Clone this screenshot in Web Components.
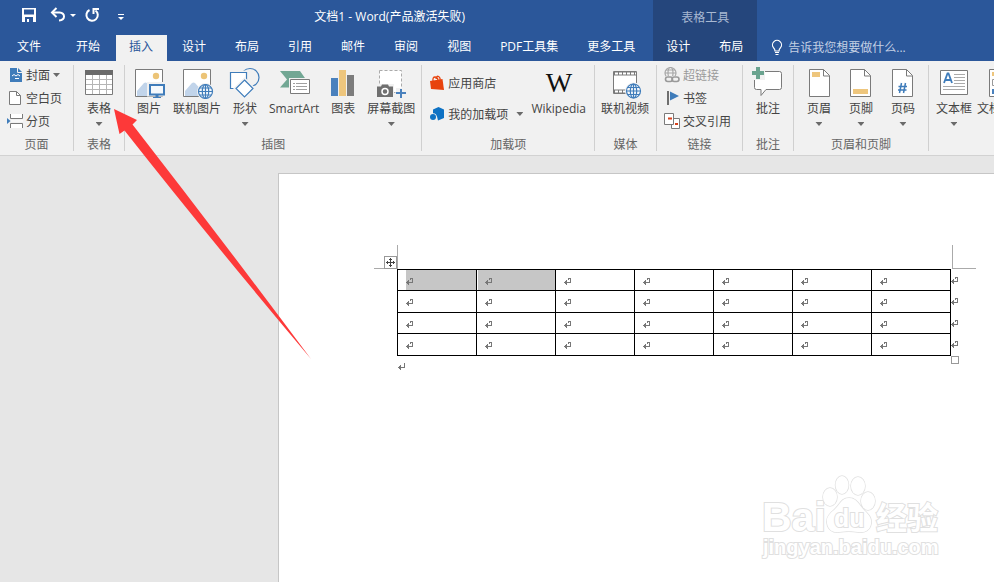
<!DOCTYPE html>
<html lang="zh-CN">
<head>
<meta charset="utf-8">
<title>文档1 - Word</title>
<style>
  html, body { margin: 0; height: 100%; }
  body {
    font: 12px/16px "Open Sans", "Noto Sans CJK SC", sans-serif;
    color: #444;
    overflow: hidden;
  }
</style>
</head>
<body>
<word-window></word-window>

<script>
const define = (name, html, setup) => {
  const tpl = document.createElement('template');
  tpl.innerHTML = html;
  customElements.define(name, class extends HTMLElement {
    constructor() {
      super();
      this.attachShadow({ mode: 'open' }).append(tpl.content.cloneNode(true));
    }
    connectedCallback() { if (setup) setup.call(this, this.shadowRoot); }
  });
};

/* ---------- icons ---------- */
const globe = (x, y, c = '#3f7cba') => `<g fill="#f4f8fc" stroke="${c}" stroke-width="1.2"><circle cx="${x}" cy="${y}" r="7"/><g fill="none"><ellipse cx="${x}" cy="${y}" rx="3.2" ry="7"/><path d="M${x - 7} ${y}h14M${x} ${y - 7}v14M${x - 6} ${y - 3.5}h12M${x - 6} ${y + 3.5}h12"/></g></g>`;
const picture = '<path d="M2.5 1.5h27v27h-27z" fill="#fff" stroke="#7a7a7a"/><circle cx="23" cy="8" r="3.2" fill="#ecc477"/><path d="M4 28v-5l7-8q1.500-1 3 0l8 9v4z" fill="#c1d4ea"/>';
const sheet = x => `<path d="M${x + .5} 1.500h14l6 6v21h-20z" fill="#fff" stroke="#7a7a7a"/><path d="M${x + 14.5} 1.500v6.500h6" fill="none" stroke="#7a7a7a"/>`;
const ICONS = {
  table: [32, '<path d="M2.500 2.500h27v24h-27z" fill="#fff" stroke="#7a7a7a"/><path d="M2 2h28v5H2z" fill="#6a6a6a"/><path d="M9.500 7v19M16.500 7v19M23.500 7v19M3 11.500h26M3 16.500h26M3 21.500h26" stroke="#b5b5b5" fill="none"/>'],
  picture: [32, picture + '<path d="M16 16h15v10.500H16z" fill="#fff" stroke="#f1f1f1" stroke-width="4"/><path d="M17 17h14v9.500H17z" fill="#f4f8fc" stroke="#3f7cba" stroke-width="2"/><path d="M22.500 27h3v2h-3zM20 29h8v1h-8z" fill="#3f7cba"/>'],
  onlinepic: [32, picture + '<circle cx="24.500" cy="23.500" r="8.500" fill="#f1f1f1"/>' + globe(24.5, 23.5)],
  shapes: [32, '<g fill="#fff" stroke="#3f7cba" stroke-width="1.200"><circle cx="21" cy="9.500" r="9" fill="#f1f1f1"/><path d="M1.500 4.500h16v16h-16z" stroke="#f1f1f1" stroke-width="4"/><path d="M1.500 4.500h16v16h-16z"/><path d="M15.500 10l10.500 10.500-10.500 10.500L5 20.500z" stroke="#f1f1f1"/><path d="M15.500 12l8.500 8.500-8.500 8.500L7 20.500z"/></g>'],
  smartart: [32, '<path d="M2 3h20l6 8.500-6 8H2l7-8z" fill="#72a794"/><path d="M11 10h22v17H11z" fill="#f1f1f1"/><path d="M12.500 11.500h19v14h-19z" fill="#fff" stroke="#7a7a7a"/><path d="M15 15.500h2M15 18.500h2M15 21.500h2M18 15.500h11M18 18.500h11M18 21.500h11" stroke="#a0a0a0"/>'],
  chart: [32, '<path d="M4 10h7v18H4z" fill="#4a81bd"/><path d="M12 2h7v26h-7z" fill="#eec67d"/><path d="M20 7h7v21h-7z" fill="#7c7c7c"/>'],
  screenshot: [32, '<path d="M4.500 2.500h22v22h-22z" fill="#fff" stroke="#aaa" stroke-dasharray="3 2"/><path d="M1 16h18v14H1z" fill="#f1f1f1"/><path d="M2 18.500h4l1-2h6l1 2h4v10.500H2z" fill="#6f6f6f"/><circle cx="10" cy="23.500" r="3" fill="#6f6f6f" stroke="#fff" stroke-width="1.500"/><path d="M21 20h11v10H21z" fill="#f1f1f1"/><path d="M25 21h2v3h4v2h-4v4h-2v-4h-4v-2h4z" fill="#4a81bd"/>'],
  wiki: [32, '<text x="16" y="24" text-anchor="middle" font-family="Liberation Serif, serif" font-size="28" fill="#111">W</text>'],
  video: [32, '<path d="M4.500 3.500h23v22h-23z" fill="#fff" stroke="#7a7a7a"/><path d="M5 5.500h22M5 23.500h22" stroke="#7a7a7a" stroke-width="4"/><path d="M6 5.500h21M6 23.500h21" stroke="#fff" stroke-width="2" stroke-dasharray="3 1"/><circle cx="24.500" cy="23" r="8.500" fill="#f1f1f1"/>' + globe(24.5, 23)],
  comment: [32, '<path d="M4.500 3.500h23q2 0 2 2v14q0 2-2 2H14l-5 6v-6H4.500q-2 0-2-2v-14q0-2 2-2z" fill="#fff" stroke="#7a7a7a"/><path d="M-1-2h14v14H-1z" fill="#f1f1f1"/><path d="M4-1h4v4h4v4H8v4H4V7H0V3h4z" fill="#6aa38f"/>'],
  header: [32, sheet(6) + '<path d="M9 4h8v5H9z" fill="#eec67d"/>'],
  footer: [32, sheet(5) + '<path d="M8 21h15v5H8z" fill="#eec67d"/>'],
  pageno: [32, sheet(5) + '<path d="M14.500 15l-2 10M18.500 15l-2 10M11.500 18.500h8.500M11 22h8.500" stroke="#3f7cba" stroke-width="1.500" fill="none"/>'],
  textbox: [32, '<path d="M2.500 2.500h27v24h-27z" fill="#fff" stroke="#7a7a7a"/><path d="M6 15L9.500 5.500h1L14 15M7.500 12h5" stroke="#3f7cba" stroke-width="1.800" fill="none"/><path d="M16 6.500h11M16 9.500h11M16 12.500h11M16 15.500h11M5 18.500h22M5 21.500h22" stroke="#aaa"/>'],
  parts: [32, '<path d="M4.500 1.500h23v27h-23z" fill="#fff" stroke="#7a7a7a"/><path d="M7 4h8v4H7z" fill="#eec67d"/><path d="M7.500 11.500h8v6h-8z" fill="none" stroke="#999"/><path d="M7 21h8v5H7z" fill="#4a81bd"/>'],
  cover: [16, '<path d="M3 1h8l4 4v10H3z" fill="#3f7cba"/><path d="M10.500 1v4.500H15" fill="none" stroke="#f1f1f1"/><path d="M5 9l2-1.500L9 9l2-1.500L13 9M8 11.500h4" stroke="#fff" fill="none"/>'],
  blank: [16, '<path d="M2.500 1.500h7l4 4v9h-11z" fill="#fff" stroke="#7a7a7a"/><path d="M9.500 1.500v4h4" fill="none" stroke="#7a7a7a"/>'],
  pagebreak: [16, '<path d="M3.500 1v4.500h12V1M3.500 15v-4.500h12V15" fill="#fff" stroke="#7a7a7a"/><path d="M4 8h12" stroke="#fff"/><path d="M0 5l3.500 3L0 11z" fill="#3f7cba"/>'],
  store: [16, '<path d="M1 6l12.500-2 1.500 11-13-1z" fill="#e8420c"/><path d="M4 6q-.5-4 2-4t3 3M7 4q.5-3.500 2.500-2.500T11 5" fill="none" stroke="#e8420c" stroke-width="1.300"/>'],
  addins: [16, '<path d="M9.500 1l5.500 2.500v8.500l-6 2.500-1-4-4-2V3.500z" fill="#0e72c4"/><circle cx="4" cy="11" r="3.800" fill="#f1f1f1"/><circle cx="4" cy="11" r="3" fill="#0e72c4"/>'],
  link: [16, '<g fill="none" stroke="#a6a6a6" stroke-width="1.200"><circle cx="6.500" cy="6" r="5.500"/><ellipse cx="6.500" cy="6" rx="2.500" ry="5.500"/><path d="M1 6h11M2 3h9"/></g><path d="M2 9h14v7H2z" fill="#f1f1f1"/><g fill="none" stroke="#999" stroke-width="1.600"><rect x="1.500" y="10" width="7" height="4.500" rx="2.200"/><rect x="8" y="10" width="7" height="4.500" rx="2.200"/></g>'],
  bookmark: [16, '<path d="M3 1h2v14H3z" fill="#6f6f6f"/><path d="M6 1.500l9 4.500-9 4.500z" fill="#3f7cba"/>'],
  crossref: [16, '<path d="M7.500 5.500h8v10h-8z" fill="#fff" stroke="#7a7a7a"/><path d="M.500.500h9v11h-9z" fill="#fff" stroke="#7a7a7a"/><path d="M4 5.500h4M11 11h3" stroke="#d8431f" stroke-width="2"/>'],
  save: [16, '<path d="M1 1h14v14H1z" fill="#fff"/><path d="M3 2.500h10v5H3zM4 10h8v5H4z" fill="#2b579a"/><path d="M6 12h2v3H6z" fill="#fff"/>'],
  undo: [16, '<path d="M2 5.500h7.500q4.500.500 4.500 4t-5 4" fill="none" stroke="#fff" stroke-width="2"/><path d="M6.500 1L2 5.500 6.500 10" fill="none" stroke="#fff" stroke-width="2"/>'],
  redo: [16, '<path d="M5.500 3A5.700 5.700 0 1 0 11.500 3.500" fill="none" stroke="#fff" stroke-width="2"/><path d="M9.500 7V2H15" fill="none" stroke="#fff" stroke-width="2"/>'],
  more: [8, '<path d="M1 1.500h6" stroke="#fff"/><path d="M1 4h6L4 7z" fill="#fff"/>'],
  down: [8, '<path d="M1 3h6L4 6z" fill="#fff"/>'],
  bulb: [16, '<path d="M6 11q0-2-1.500-3.300a4.500 4.500 0 1 1 7 0Q10 9 10 11z" fill="none" stroke="#fff" stroke-width="1.200"/><path d="M6 12.500h4M6.500 14.500h3" stroke="#fff"/>']
};
define('word-icon', '<style>:host{display:block;flex:none}svg{display:block;overflow:visible}</style><div></div>',
  function (root) {
    const icon = ICONS[this.getAttribute('name')];
    if (!icon) return;
    const s = icon[0];
    root.querySelector('div').innerHTML = `<svg width="${s}" height="${s}" viewBox="0 0 ${s} ${s}" aria-hidden="true">${icon[1]}</svg>`;
  });

/* ---------- header ---------- */
define('quick-access', `
<style>
  :host { display: flex; align-items: center; width: 130px; height: 30px; box-sizing: border-box; padding-left: 21px; }
  button { border: 0; padding: 0; background: none; display: block; }
  .undo { margin-left: 13px; } .arrow { margin-left: 3px; } .redo { margin-left: 7px; } .more { margin-left: 17px; padding-top: 3px; }
</style>
<button aria-label="保存"><word-icon name="save"></word-icon></button>
<button class="undo" aria-label="撤消"><word-icon name="undo"></word-icon></button>
<button class="arrow" aria-label="撤消列表"><word-icon name="down"></word-icon></button>
<button class="redo" aria-label="重复"><word-icon name="redo"></word-icon></button>
<button class="more" aria-label="自定义"><word-icon name="more"></word-icon></button>`);

define('ribbon-tab', `
<style>
  :host { display: block; }
  button { display: block; height: 26px; border: 0; padding: 0 14px 2px 13px; background: none; color: #fff; font: inherit; white-space: nowrap; }
  :host([file]) button { padding-left: 17px; padding-right: 20px; }
  :host([active]) button { background: #f1f1f1; color: #2b579a; }
</style>
<button role="tab"><slot></slot></button>`);

define('word-header', `
<style>
  :host { display: flex; height: 61px; background: #2b579a; color: #fff; }
  .col { display: flex; flex-direction: column; justify-content: space-between; flex: none; }
  .main { padding-right: 4px; }
  .top { display: flex; align-items: center; }
  h1 { margin: 0; flex: 1; font: inherit; text-align: center; padding-top: 4px; }
  nav { display: flex; gap: 2px; }
  .context { background: #25467c; }
  .context p { margin: 0; padding-top: 10px; text-align: center; color: #a8b8d2; }
  .tell { flex: 1; display: flex; align-items: flex-end; padding: 0 12px 5px; }
  label { display: flex; align-items: center; gap: 3px; flex: 1; }
  input { flex: 1; min-width: 0; border: 0; padding: 0; background: none; font: inherit; color: #fff; outline: 0; }
  input::placeholder { color: #c3d0e4; opacity: 1; }
</style>
<div class="col main">
  <div class="top"><quick-access></quick-access><h1>文档1 - Word(产品激活失败)</h1></div>
  <nav>
    <ribbon-tab file>文件</ribbon-tab><ribbon-tab>开始</ribbon-tab><ribbon-tab active>插入</ribbon-tab>
    <ribbon-tab>设计</ribbon-tab><ribbon-tab>布局</ribbon-tab><ribbon-tab>引用</ribbon-tab>
    <ribbon-tab>邮件</ribbon-tab><ribbon-tab>审阅</ribbon-tab><ribbon-tab>视图</ribbon-tab>
    <ribbon-tab>PDF工具集</ribbon-tab><ribbon-tab>更多工具</ribbon-tab>
  </nav>
</div>
<div class="col context">
  <p>表格工具</p>
  <nav><ribbon-tab>设计</ribbon-tab><ribbon-tab>布局</ribbon-tab></nav>
</div>
<div class="tell"><label><word-icon name="bulb"></word-icon><input aria-label="告诉我您想要做什么" placeholder="告诉我您想要做什么..."></label></div>`);

/* ---------- ribbon ---------- */
define('ribbon-button', `
<style>
  :host { display: block; flex: none; }
  button { display: flex; flex-direction: column; align-items: center; min-width: 32px; border: 0; padding: 3px 0 0; background: none; color: inherit; font: inherit; white-space: nowrap; }
  span { padding-top: 1px; }
  i { display: none; width: 7px; height: 4px; margin-top: 5px; background: #6a6a6a; clip-path: polygon(0 0, 100% 0, 50% 100%); }
  :host([menu]) i { display: block; }
  :host([small]) button { flex-direction: row; gap: 3px; height: 20px; padding: 0; }
  :host([small]) span { padding-top: 2px; }
  :host([small]) i { margin: 0; }
  :host([wide]) i { margin-left: 5px; }
  :host([disabled]) { color: #9a9a9a; }
</style>
<button><word-icon></word-icon><span><slot></slot></span><i></i></button>`,
  function (root) {
    const icon = document.createElement('word-icon');
    icon.setAttribute('name', this.getAttribute('icon'));
    root.querySelector('word-icon').replaceWith(icon);
    root.querySelector('button').disabled = this.hasAttribute('disabled');
  });

define('ribbon-stack', `
<style>
  :host { display: flex; flex-direction: column; gap: 3px; flex: none; }
  :host([loose]) { gap: 11px; padding-top: 8px; }
</style><slot></slot>`);

define('ribbon-group', `
<style>
  :host { display: flex; flex-direction: column; justify-content: space-between; flex: none; height: 86px; border-right: 1px solid #d0d0d0; }
  .body { display: flex; align-items: flex-start; gap: var(--gap, 7px); padding: 0 var(--end, 9px) 0 var(--start, 9px); }
  .name { line-height: 12px; text-align: center; color: #666; }
</style>
<div class="body"><slot></slot></div><div class="name"></div>`,
  function (root) { root.querySelector('.name').textContent = this.getAttribute('name') || ''; });

define('word-ribbon', `
<style>
  :host { display: flex; padding: 4px 0; background: #f1f1f1; border-bottom: 1px solid #d2d2d2; overflow: hidden; }
  .page { --start: 7px; --end: 11px; }
  .art { --start: 8px; --end: 6px; --gap: 8px; }
  .add { --start: 7px; --end: 8px; --gap: 8px; }
  .media { --start: 6px; --end: 7px; }
  .links { --start: 7px; --end: 11px; }
  .hf { --gap: 10px; }
  .text { --start: 7px; --gap: 5px; }
</style>
<ribbon-group class="page" name="页面"><ribbon-stack>
  <ribbon-button small menu icon="cover">封面</ribbon-button>
  <ribbon-button small icon="blank">空白页</ribbon-button>
  <ribbon-button small icon="pagebreak">分页</ribbon-button>
</ribbon-stack></ribbon-group>
<ribbon-group name="表格"><ribbon-button menu icon="table">表格</ribbon-button></ribbon-group>
<ribbon-group class="art" name="插图">
  <ribbon-button icon="picture">图片</ribbon-button>
  <ribbon-button icon="onlinepic">联机图片</ribbon-button>
  <ribbon-button menu icon="shapes">形状</ribbon-button>
  <ribbon-button icon="smartart">SmartArt</ribbon-button>
  <ribbon-button icon="chart">图表</ribbon-button>
  <ribbon-button menu icon="screenshot">屏幕截图</ribbon-button>
</ribbon-group>
<ribbon-group class="add" name="加载项">
  <ribbon-stack loose>
    <ribbon-button small icon="store">应用商店</ribbon-button>
    <ribbon-button small wide menu icon="addins">我的加载项</ribbon-button>
  </ribbon-stack>
  <ribbon-button icon="wiki">Wikipedia</ribbon-button>
</ribbon-group>
<ribbon-group class="media" name="媒体"><ribbon-button icon="video">联机视频</ribbon-button></ribbon-group>
<ribbon-group class="links" name="链接"><ribbon-stack>
  <ribbon-button small disabled icon="link">超链接</ribbon-button>
  <ribbon-button small icon="bookmark">书签</ribbon-button>
  <ribbon-button small icon="crossref">交叉引用</ribbon-button>
</ribbon-stack></ribbon-group>
<ribbon-group name="批注"><ribbon-button icon="comment">批注</ribbon-button></ribbon-group>
<ribbon-group class="hf" name="页眉和页脚">
  <ribbon-button menu icon="header">页眉</ribbon-button>
  <ribbon-button menu icon="footer">页脚</ribbon-button>
  <ribbon-button menu icon="pageno">页码</ribbon-button>
</ribbon-group>
<ribbon-group class="text">
  <ribbon-button menu icon="textbox">文本框</ribbon-button>
  <ribbon-button menu icon="parts">文档部件</ribbon-button>
</ribbon-group>`);

/* ---------- document ---------- */
define('para-mark', `
<style>:host { display: block; width: 7px; height: 7px; } svg { display: block; }</style>
<svg width="7" height="7" viewBox="0 0 7 7" fill="#777" shape-rendering="crispEdges" aria-hidden="true">
  <path d="M4 0h3v5H3v2H2V6H1V5H0V4h1V3h1V2h1v2h3V1H5v1H4z"/>
</svg>`,
  function (root) {
    if (this.hasAttribute('plain')) root.querySelector('path').setAttribute('d', 'M6 0h1v5H3v2H2V6H1V5H0V4h1V3h1V2h1v2h3z');
  });

define('doc-table', `
<style>
  :host { display: block; position: relative; }
  table { width: 100%; table-layout: fixed; border-collapse: separate; border-spacing: 0; border: solid #000; border-width: 1px 0 0 1px; }
  td { position: relative; height: 20px; padding: 0 0 0 8px; border: solid #000; border-width: 0 1px 1px 0; background: no-repeat right / var(--sel, 0) 100% linear-gradient(#c6c6c6, #c6c6c6); line-height: 0; box-sizing: content-box; vertical-align: top; }
  tr:nth-child(even) td { height: 21px; }
  td > para-mark { margin-top: 8px; }
  .s1 { --sel: calc(100% - 8px); } .s2 { --sel: calc(100% - 1px); }
  td > .end { position: absolute; left: 100%; top: 7px; margin: 0 0 0 1px; }
  .move { position: absolute; left: -13px; top: -13px; width: 11px; height: 11px; border: 1px solid #999; background: #fff; }
  .move svg { display: block; }
  .size { position: absolute; left: 100%; top: 100%; width: 6px; height: 6px; border: 1px solid #999; background: #fff; }
  .corner { position: absolute; bottom: 100%; width: 23px; height: 23px; border: solid #aaa; border-width: 0 0 1px; }
  .corner.l { right: 100%; margin-right: -1px; border-right-width: 1px; }
  .corner.r { left: 100%; margin-left: 1px; border-left-width: 1px; }
</style>
<table><tbody></tbody></table>
<div class="corner l"></div><div class="corner r"></div>
<div class="move"><svg width="11" height="11" viewBox="0 0 11 11" shape-rendering="crispEdges"><path d="M5 1h1v4h4v1H6v4H5V6H1V5h4zM4 2h3v1H4zM4 8h3v1H4zM2 4h1v3H2zM8 4h1v3H8z" fill="#444"/></svg></div>
<div class="size"></div>`,
  function (root) {
    const body = root.querySelector('tbody');
    if (body.rows.length) return;
    for (let r = 0; r < 4; r++) {
      const row = body.insertRow();
      for (let c = 0; c < 7; c++) {
        const cell = row.insertCell();
        if (r === 0 && c < 2) cell.className = 's' + (c + 1);
        cell.append(document.createElement('para-mark'));
        if (c === 6) {
          const end = document.createElement('para-mark');
          end.className = 'end';
          cell.append(end);
        }
      }
    }
  });

define('baidu-mark', `
<style>
  :host { display: block; }
  svg { display: block; overflow: visible; }
  text, .o { fill: #fff; stroke: #e0e0e0; stroke-width: 2px; paint-order: stroke; }
  .o { stroke-width: 1.5px; }
  text { font-family: "Liberation Sans", "Noto Sans CJK SC", sans-serif; font-weight: 700; }
</style>
<svg width="180" height="90" viewBox="0 0 180 90">
  <text x="0" y="57" font-size="41">Bai</text>
  <g class="o">
    <ellipse cx="68" cy="23" rx="7" ry="9"/><ellipse cx="80" cy="11" rx="6.500" ry="9"/>
    <ellipse cx="96" cy="12" rx="7" ry="9"/><ellipse cx="106" cy="27" rx="7" ry="9"/>
    <path d="M87 24c-8 0-9 7-15 12-5 4-8 8-7 13 1 7 6 10 12 9 8-1 12-1 19 0 7 1 12-2 13-8 1-6-2-9-7-14-5-5-7-12-15-12z"/>
  </g>
  <text x="72" y="53" font-size="25">du</text>
  <text x="114" y="55" font-size="31">经验</text>
  <text x="1" y="80" font-size="20">jingyan.baidu.com</text>
</svg>`);

define('word-canvas', `
<style>
  :host { display: flex; flex: 1; padding: 17px 0 0 278px; background: #e6e6e6; }
  article { position: relative; flex: 1; min-width: 0; border: solid #c6c6c6; border-width: 1px 0 0 1px; background: #fff; padding: 95px 43px 0 118px; }
  .after { margin: 7px 0 0 1px; }
  baidu-mark { position: absolute; right: 52px; bottom: 18px; }
</style>
<article><doc-table></doc-table><para-mark class="after" plain></para-mark><baidu-mark></baidu-mark></article>`);

define('pointer-arrow', `
<style>:host { display: block; position: absolute; left: 114px; top: 109px; pointer-events: none; } svg { display: block; }</style>
<svg width="198" height="251" viewBox="0 0 198 251" aria-hidden="true">
  <path d="M0 0L23 11 18.500 15.500Q106 128 197 250 96 130 10.500 21.500L5.500 25z" fill="#fd3939"/>
</svg>`);

define('word-window', `
<style>:host { display: flex; flex-direction: column; height: 100vh; position: relative; overflow: hidden; }</style>
<word-header></word-header><word-ribbon></word-ribbon><word-canvas></word-canvas><pointer-arrow></pointer-arrow>`);
</script>
</body>
</html>
